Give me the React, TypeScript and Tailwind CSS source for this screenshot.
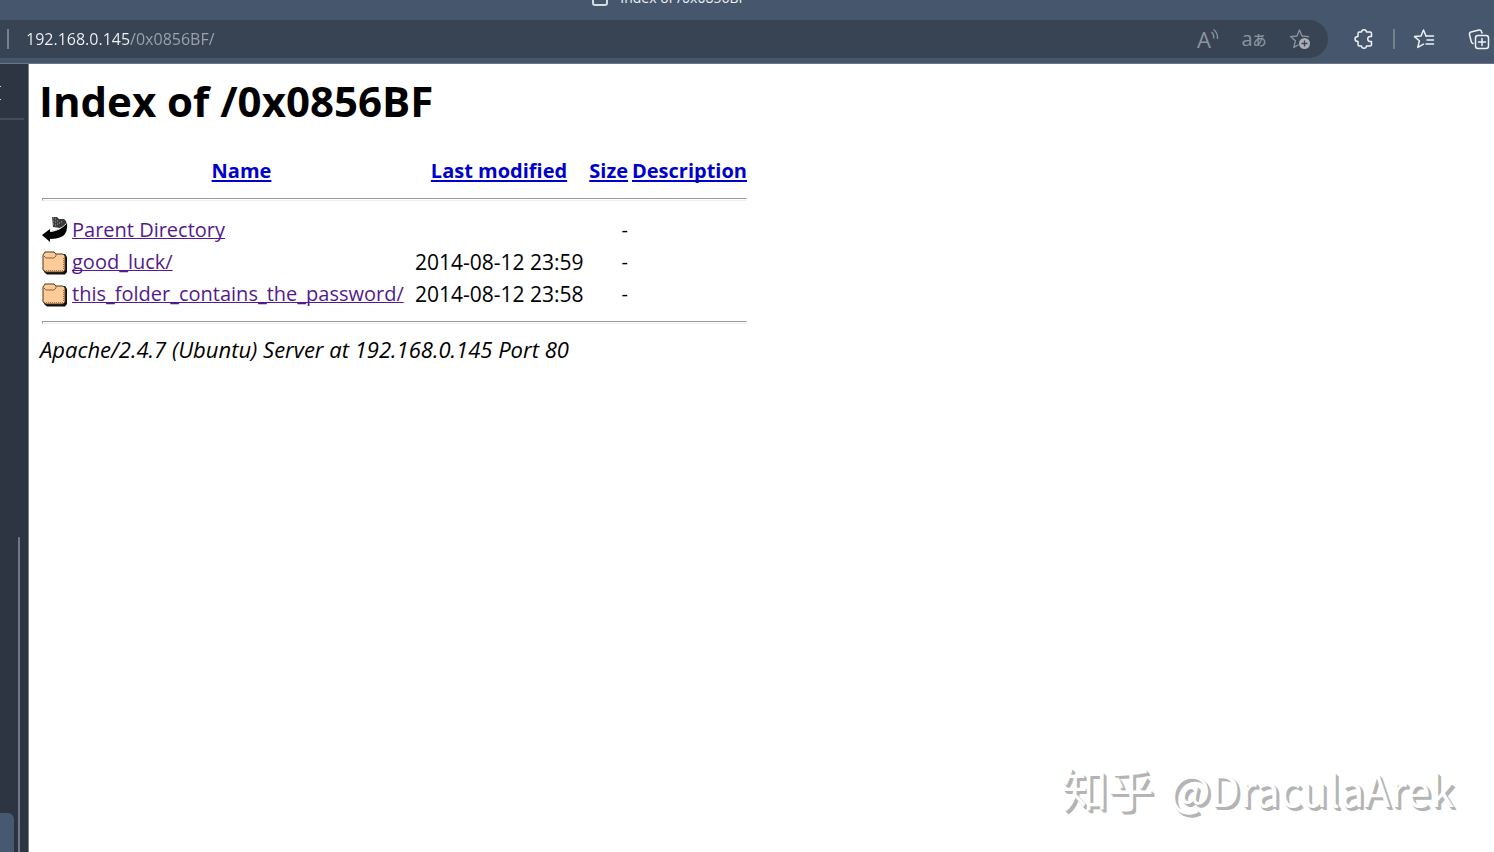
import React from 'react';

type Entry = {
  name: string;
  modified: string;
  kind: 'back' | 'folder';
};

const entries: Entry[] = [
  { name: 'Parent Directory', modified: '', kind: 'back' },
  { name: 'good_luck/', modified: '2014-08-12 23:59', kind: 'folder' },
  { name: 'this_folder_contains_the_password/', modified: '2014-08-12 23:58', kind: 'folder' },
];

const BackIcon = () => (
  <svg width="26" height="28" viewBox="0 0 26 28" aria-hidden="true">
    <path d="M10 1 L15 1 L17 3 L22 3 Q25 5 25 10 L18 12 L11 11 Z" fill="#3b3b3b" />
    <path d="M11 2h1M11 5h1M11 8h1M13 3h1M13 6h1M13 9h1M15 5h1M15 8h1M17 7h1M19 6h1" stroke="#aaa" strokeWidth="1" />
    <path d="M0 19 L8 13 L8 16 Q18 15 25 7 Q26 16 21 20 Q16 23 8 23 L8 26 Z" fill="#000" />
    <path d="M8 15.500 Q18 14.500 24.500 7.500" fill="none" stroke="#ddd" strokeWidth="1" />
  </svg>
);

const FolderIcon = () => (
  <svg width="26" height="26" viewBox="0 -2 26 26" aria-hidden="true">
    <path d="M3 3 H23 L25 6 V21 L23 23.500 H5 L2 21 Z" fill="#111" />
    <path d="M1 4 L3 1 H12 L14 3 H21 L23 5 V19 L21 21 H4 L1 19 Z" fill="#ffcc99" stroke="#4a3520" strokeWidth="1" />
    <path d="M2 5 L4 7 H12 L14 5 V3" fill="none" stroke="#8a6238" strokeWidth="1" />
    <path d="M4 19.500 H21" stroke="#9c7348" strokeWidth="1" strokeDasharray="1 1" />
    <path d="M21.500 7 V19" stroke="#9c7348" strokeWidth="1" strokeDasharray="1 1" />
  </svg>
);

const iconButton = 'flex h-[22px] w-[22px] shrink-0 items-center justify-center';

const BrowserBar = () => (
  <header className="border-b border-[#6b7686] bg-[#46566c]">
    <div className="flex h-5 items-start justify-center overflow-hidden pr-[156px]">
      <div className="-mt-3 flex items-center gap-3 text-sm leading-5 text-[#eef2f6]">
        <span className="h-4 w-4 rounded-[3px] border-2 border-[#d5dbe2]" />
        <span>Index of /0x0856BF</span>
      </div>
    </div>

    <div className="flex items-center pr-1">
      <div className="flex h-[38px] flex-1 items-center rounded-r-full bg-[#384454] pr-[17px] pl-[7px]">
        <span className="h-5 w-[2px] bg-[#77818e]" />
        <input
          aria-label="Address"
          defaultValue="192.168.0.145/0x0856BF/"
          className="ml-[17px] min-w-0 flex-1 bg-[linear-gradient(to_right,#f2f5f8_104px,#9ca4ae_104px)] bg-clip-text text-base text-transparent outline-none"
        />
        <div className="flex items-center gap-6 text-[#8c949e]">
          <button aria-label="Read aloud" className={iconButton}>
            <span className="text-[22px] leading-5">A</span>
            <svg width="8" height="12" viewBox="0 0 8 12" className="mb-2 shrink-0" fill="none" stroke="currentColor" strokeWidth="1.300">
              <path d="M0.500 3 Q3 5 2.800 9.500 M2.500 0.600 Q7 4 6.500 10" />
            </svg>
          </button>
          <button aria-label="Translate" className={`${iconButton} leading-5`}>
            <span className="text-xl">a</span>
            <span className="font-['Noto_Sans_CJK_JP',sans-serif] text-sm font-medium">あ</span>
          </button>
          <button aria-label="Add to favorites" className={iconButton}>
            <svg width="22" height="22" viewBox="0 0 22 22" fill="none" stroke="currentColor" strokeWidth="1.300" strokeLinejoin="round">
              <path d="M19.500 9.500 L19.500 8.600 L13 8 L10.500 2 L8 8 L1.500 8.600 L6.400 12.800 L4.800 19.400 L9.500 16.700" />
              <circle cx="15.500" cy="15.500" r="5.500" fill="#a9aeb4" stroke="none" />
              <path d="M15.500 12.500 V18.500 M12.500 15.500 H18.500" stroke="#384454" />
            </svg>
          </button>
        </div>
      </div>

      <button aria-label="Extensions" className={`${iconButton} ml-[25px] text-[#eef2f6]`}>
        <svg width="22" height="22" viewBox="0 0 22 22" fill="none" stroke="currentColor" strokeWidth="1.500" strokeLinejoin="round">
          <path d="M6.500 4 H8.500 C8.800 1 13.200 1 13.500 4 H17 Q18.500 4 18.500 5.500 V8.500 H17 C14 8.800 14 13.200 17 13.500 H18.500 V16.500 Q18.500 18 17 18 H13.500 C13.200 21 8.800 21 8.500 18 H6.500 Q5 18 5 16.500 V13.500 C1 13.500 1 8.500 5 8.500 V5.500 Q5 4 6.500 4 Z" />
        </svg>
      </button>
      <span className="mx-[18px] h-5 w-[2px] bg-[#77818e]" />
      <button aria-label="Favorites" className={`${iconButton} text-[#eef2f6]`}>
        <svg width="22" height="22" viewBox="0 0 22 22" fill="none" stroke="currentColor" strokeWidth="1.500" strokeLinejoin="round" strokeLinecap="round">
          <path d="M13 8 L10.500 2 L8 8 L1.500 8.600 L6.400 12.800 L4.800 19.400 L10.500 16.200" />
          <path d="M13 8 H20.500 M14 12 H20.500 M13 16 H20.500" />
        </svg>
      </button>
      <button aria-label="Collections" className={`${iconButton} ml-[33px] text-[#eef2f6]`}>
        <svg width="22" height="22" viewBox="0 0 22 22" fill="none" stroke="currentColor" strokeWidth="1.500" strokeLinejoin="round" strokeLinecap="round">
          <path d="M5 15.500 Q3.500 15 3.200 13.500 L1.500 6.500 Q1.200 4.500 3 4 L11 2 Q13 1.600 13.500 3.500 L14 5" />
          <rect x="7.500" y="7.500" width="13" height="13" rx="2.500" />
          <path d="M14 10.500 V17.500 M10.500 14 H17.500" />
        </svg>
      </button>
    </div>
    <div className="h-[5px]" />
  </header>
);

const Sidebar = () => (
  <aside className="flex w-[29px] shrink-0 flex-col border-r border-[#7b838d] bg-[#2c3541]">
    <div className="mr-1 flex h-14 flex-col justify-center gap-3 border-b-2 border-[#434d5a] pt-1">
      <span className="h-px w-px bg-[#d5dbe2]" />
      <span className="h-px w-px bg-[#d5dbe2]" />
    </div>
    <div className="flex flex-1 items-end">
      <div className="mr-1 h-[39px] w-[14px] rounded-tr-md bg-[#475970] shadow-md" />
      <div className="h-[43%] w-[2px] rounded-t bg-[#707882]" />
    </div>
  </aside>
);

const Rule = ({ className }: { className: string }) => (
  <tr>
    <td colSpan={5} className={className}>
      <hr className="h-[3px] border border-[#eeeeee] border-t-[#999999] border-l-[#999999]" />
    </td>
  </tr>
);

const headLink = 'text-[#0000cc] underline decoration-2 underline-offset-2 [text-decoration-skip-ink:none]';

const DirectoryTable = () => (
  <table className="ml-[2px] w-[705px] table-fixed text-xl leading-8 whitespace-nowrap">
    <colgroup>
      <col className="w-[30px]" />
      <col className="w-[343px]" />
      <col className="w-[172px]" />
      <col className="w-[45px]" />
      <col className="w-[115px]" />
    </colgroup>
    <thead>
      <tr>
        <th />
        <th className="pr-1"><a href="#name" className={headLink}>Name</a></th>
        <th className="pr-1"><a href="#modified" className={headLink}>Last modified</a></th>
        <th className="pr-1 text-right"><a href="#size" className={headLink}>Size</a></th>
        <th><a href="#description" className={headLink}>Description</a></th>
      </tr>
    </thead>
    <tbody>
      <Rule className="pt-[11px] pb-[13px]" />
      {entries.map((entry) => (
        <tr key={entry.name} className="h-8">
          <td>{entry.kind === 'back' ? <BackIcon /> : <FolderIcon />}</td>
          <td>
            <a href="#entry" className="text-[#551a8b] underline decoration-1 underline-offset-1 [text-decoration-skip-ink:none]">{entry.name}</a>
          </td>
          <td className="text-[21px] leading-8">{entry.modified}</td>
          <td className="pr-1 text-right">-</td>
          <td />
        </tr>
      ))}
      <Rule className="pt-[11px] pb-[9px]" />
    </tbody>
  </table>
);

const App: React.FC = () => {
  return (
    <div className="flex min-h-screen flex-col bg-white font-['Open_Sans','Noto_Sans_CJK_SC',sans-serif] text-black">
      <BrowserBar />
      <div className="flex flex-1">
        <Sidebar />
        <main className="flex-1 pt-[9px] pl-[10px]">
          <h1 className="mb-[26px] text-[42px] leading-[56px] font-bold">Index of /0x0856BF</h1>
          <div className="pl-px">
            <DirectoryTable />
            <address className="text-[22px] leading-8 italic">Apache/2.4.7 (Ubuntu) Server at 192.168.0.145 Port 80</address>
          </div>
        </main>
      </div>
      <div className="pointer-events-none absolute right-10 bottom-[34px] flex items-baseline gap-4 font-['Noto_Sans_CJK_SC',sans-serif] text-[46px] leading-[60px] text-white [text-shadow:1px_1px_0_#b4b4b4,2px_2px_0_#b4b4b4,3px_3px_0_#b4b4b4]">
        <span>知乎</span>
        <span className="text-[43px]">@DraculaArek</span>
      </div>
    </div>
  );
};

export default App;
